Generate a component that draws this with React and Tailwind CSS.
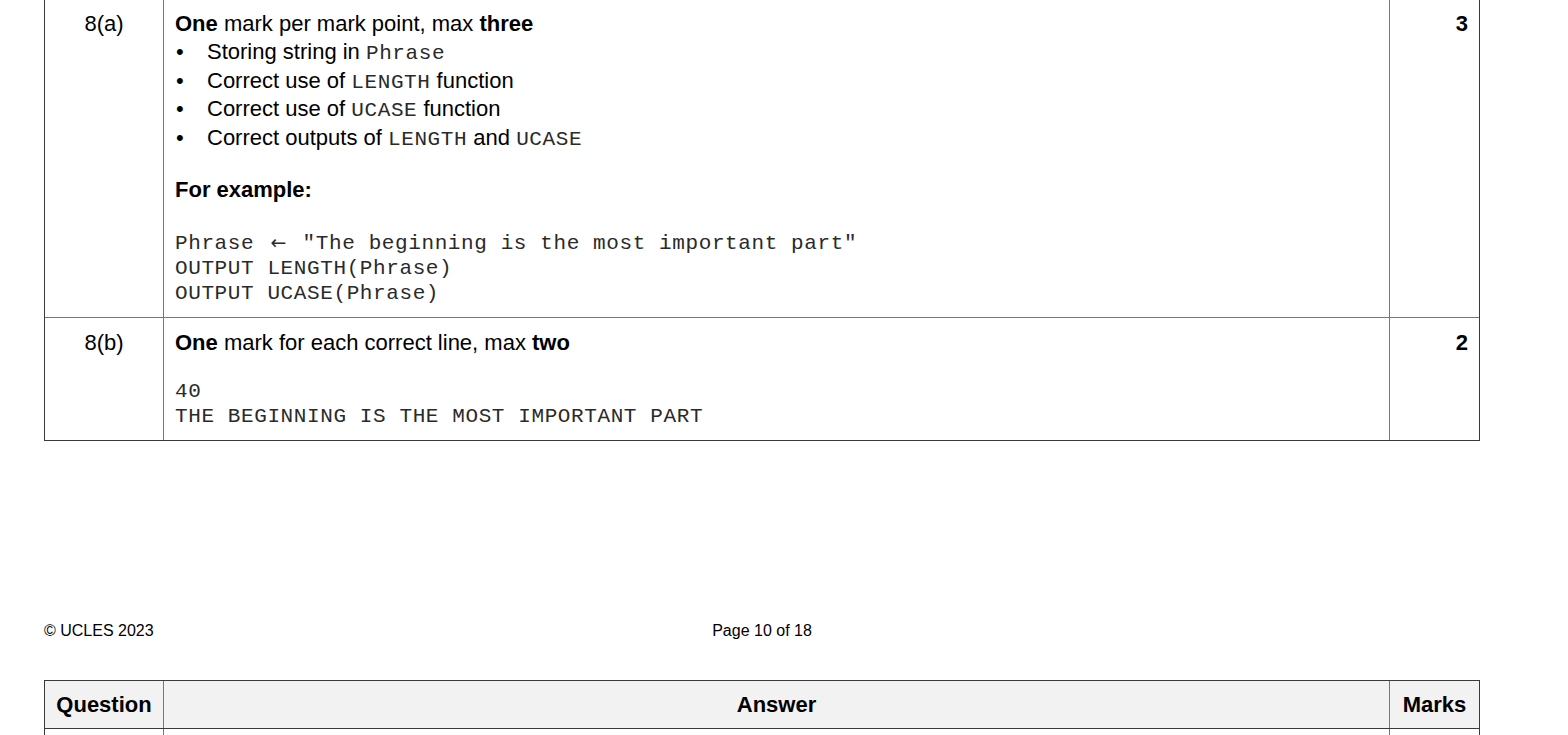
import React from 'react';

const sans = { fontFamily: '"Liberation Sans", Arial, sans-serif' };
const mono = 'font-["Liberation_Mono",monospace] text-[21px] tracking-[0.6px] text-[#2a2a2a]';

function Code({ children }) {
  return <span className={`${mono} leading-none`}>{children}</span>;
}

function Arrow() {
  return (
    <span className='inline-block w-[22px] text-center font-["DejaVu_Sans",sans-serif] text-[19px] leading-none tracking-normal'>←</span>
  );
}

function Bullet({ children }) {
  return (
    <li className="flex h-[28.5px] items-center">
      <span className="w-[32px] pl-[1px]">•</span>
      <span>{children}</span>
    </li>
  );
}

export default function App() {
  return (
    <div className="min-h-screen bg-white text-black text-[22px]" style={sans}>
      {/* mark scheme table, page top is cut off */}
      <div className="ml-[44px] w-[1436px] -mt-[2px] border-x border-b border-[#3a3a3a]">
        <div className="flex border-b border-[#777]">
          <div className="w-[119px] shrink-0 border-r border-[#777] text-center pt-[11px] leading-[29px]">8(a)</div>
          <div className="w-[1226px] shrink-0 border-r border-[#777] pl-[11px] pt-[11px] pb-[11px]">
            <p className="leading-[29px]">
              <b>One</b> mark per mark point, max <b>three</b>
            </p>
            <ul className="leading-[28.5px]">
              <Bullet>Storing string in <Code>Phrase</Code></Bullet>
              <Bullet>Correct use of <Code>LENGTH</Code> function</Bullet>
              <Bullet>Correct use of <Code>UCASE</Code> function</Bullet>
              <Bullet>Correct outputs of <Code>LENGTH</Code> and <Code>UCASE</Code></Bullet>
            </ul>
            <p className="mt-[22.5px] leading-[29px] font-bold">For example:</p>
            <div className={`${mono} mt-[27px] leading-[25px] whitespace-pre`}>
              <div className="h-[25px]">Phrase <Arrow /> "The beginning is the most important part"</div>
              <div className="h-[25px]">OUTPUT LENGTH(Phrase)</div>
              <div className="h-[25px]">OUTPUT UCASE(Phrase)</div>
            </div>
          </div>
          <div className="flex-1 text-right pr-[11px] pt-[11px] leading-[29px] font-bold">3</div>
        </div>
        <div className="flex">
          <div className="w-[119px] shrink-0 border-r border-[#777] text-center pt-[10.5px] leading-[29px]">8(b)</div>
          <div className="w-[1226px] shrink-0 border-r border-[#777] pl-[11px] pt-[10.5px] pb-[11px]">
            <p className="leading-[29px]">
              <b>One</b> mark for each correct line, max <b>two</b>
            </p>
            <div className={`${mono} mt-[22px] leading-[25px] whitespace-pre`}>
              <div className="h-[25px]">40</div>
              <div className="h-[25px]">THE BEGINNING IS THE MOST IMPORTANT PART</div>
            </div>
          </div>
          <div className="flex-1 text-right pr-[11px] pt-[10.5px] leading-[29px] font-bold">2</div>
        </div>
      </div>

      {/* page footer */}
      <div className="ml-[44px] w-[1436px] mt-[180px] relative h-[20px] text-[16px] leading-[20px]">
        <span>© UCLES 2023</span>
        <span className="absolute left-0 right-0 top-0 text-center">Page 10 of 18</span>
      </div>

      {/* next page header */}
      <div className="ml-[44px] w-[1436px] mt-[39px] border border-[#3a3a3a]">
        <div className="flex h-[48px] bg-[#f2f2f2] font-bold text-[22px] border-b border-[#3a3a3a] items-center">
          <div className="w-[119px] shrink-0 h-full flex items-center justify-center border-r border-[#777]">Question</div>
          <div className="w-[1226px] shrink-0 h-full flex items-center justify-center border-r border-[#777]">Answer</div>
          <div className="flex-1 h-full flex items-center justify-center">Marks</div>
        </div>
        <div className="flex h-[40px]">
          <div className="w-[119px] shrink-0 border-r border-[#777]"></div>
          <div className="w-[1226px] shrink-0 border-r border-[#777]"></div>
          <div className="flex-1"></div>
        </div>
      </div>
    </div>
  );
}
